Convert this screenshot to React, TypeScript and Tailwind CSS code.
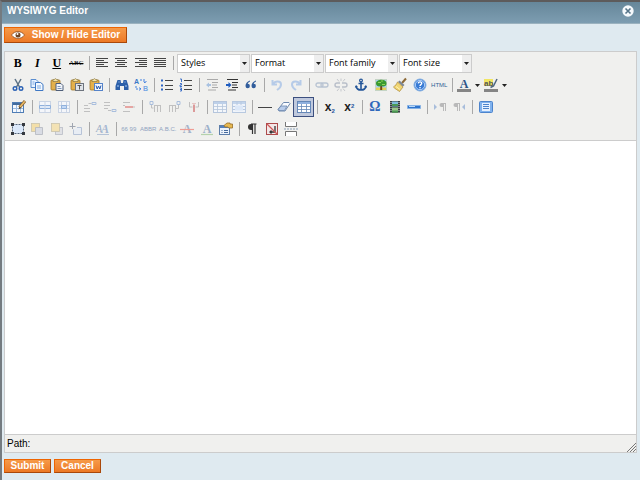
import type { ReactNode } from "react";
import { clsx } from "clsx";

interface Tool {
    label: string;
    icon: ReactNode;
    disabled?: boolean;
    active?: boolean;
    menu?: boolean;
}

const svg = (children: ReactNode) => (
    <svg viewBox="0 0 14 14" className="w-[14px] h-[14px] shrink-0 overflow-visible" fill="none" aria-hidden="true">
        {children}
    </svg>
);

const lines = (d: string) => svg(<path d={d} stroke="#444" />);

const clipboard = (overlay: ReactNode) =>
    svg(
        <>
            <rect x="1" y="2" width="9" height="10" rx="1" fill="#e3b04b" stroke="#9c7527" strokeWidth=".8" />
            <path d="M3 3.500h5V1.600H6.800L5.500.6 4.200 1.600H3z" fill="#f5e3a4" stroke="#7b6a3a" strokeWidth=".6" />
            {overlay}
        </>
    );

const pageStack = (x: string, back: string, front: string) =>
    svg(
        <>
            <rect x="1.500" y="1.500" width="8" height="8" fill={back} stroke="#c9c2ac" strokeWidth=".8" />
            <path d={x} fill={front} stroke="#b3b6be" strokeWidth=".8" />
        </>
    );

const binoculars = svg(
    <>
        <path d="M2.500 2h3l.5 3h2l.5-3h3l2 6v4H9V8H5v4H.5V8z" fill="#2c5fa8" />
        <path d="M2 8h2M10 8h2M3.500 4h1M9.500 4h1" stroke="#a9ccf5" strokeWidth="1.200" />
    </>
);

const listIcon = (marks: ReactNode) =>
    svg(
        <>
            {marks}
            <path d="M5 2.500h8M5 7.500h8M5 11.500h8" stroke="#444" />
        </>
    );

const indentIcon = (arrow: string, color: string, ink: string) =>
    svg(
        <>
            <path d="M2 1.500h11M7 4.500h6M7 7h5M7 9.500h6M3 12h8" stroke={ink} />
            <path d={arrow} fill={color} />
        </>
    );

const grid = (head: string, line: string, fill: string) =>
    svg(
        <>
            <rect x=".5" y="1.500" width="13" height="11" fill={fill} stroke={line} />
            <path d="M1 2h12v2H1z" fill={head} />
            <path d="M1 6.500h12M1 9.500h12M4.500 4v8M9.500 4v8" stroke={line} strokeWidth=".8" />
        </>
    );

const letterMark = (color: string, bar: string, barY: string) =>
    svg(
        <>
            <text x="7" y="11" textAnchor="middle" fontSize="12" fontWeight="bold" fontFamily="Liberation Serif, serif" fill={color}>A</text>
            <path d={barY} stroke={bar} strokeWidth="1.200" />
        </>
    );

const tinyText = (text: string) => (
    <span className="font-['Liberation_Sans',sans-serif] text-[6px] leading-none text-[#8fa3bf]">{text}</span>
);

const serif = "font-['Liberation_Serif',serif] text-[12px] leading-none text-black";

const formatting: Tool[] = [
    { label: "Bold", icon: <b className={serif}>B</b> },
    { label: "Italic", icon: <b className={clsx(serif, "italic")}>I</b> },
    { label: "Underline", icon: <b className={clsx(serif, "underline")}>U</b> },
    { label: "Strikethrough", icon: <span className="font-['Liberation_Serif',serif] text-[7px] leading-none text-black line-through">ABC</span> }
];

const alignment: Tool[] = [
    { label: "Align left", icon: lines("M1 2.500h12M1 4.500h8M1 6.500h12M1 8.500h8M1 10.500h12") },
    { label: "Align center", icon: lines("M1 2.500h12M3 4.500h8M1 6.500h12M3 8.500h8M1 10.500h12") },
    { label: "Align right", icon: lines("M1 2.500h12M5 4.500h8M1 6.500h12M5 8.500h8M1 10.500h12") },
    { label: "Align full", icon: lines("M1 2.500h12M1 4.500h12M1 6.500h12M1 8.500h12M1 10.500h12") }
];

const rowTwo: Tool[][] = [
    [
        {
            label: "Cut",
            icon: svg(
                <>
                    <path d="M4 1l4.500 8M10 1L5.500 9" stroke="#5c7286" strokeWidth="1.500" />
                    <circle cx="4" cy="10.500" r="1.800" stroke="#2b62b5" strokeWidth="1.400" />
                    <circle cx="10" cy="10.500" r="1.800" stroke="#2b62b5" strokeWidth="1.400" />
                </>
            )
        },
        {
            label: "Copy",
            icon: svg(
                <>
                    <path d="M1 1.500h5l2 2v6H1z" fill="#e8f2ff" stroke="#5b8ed0" />
                    <path d="M5.500 4.500h5l2.500 2v6H5.500z" fill="#f4f9ff" stroke="#3f78c4" />
                    <path d="M7 8h4M7 10h4M2.500 4h2M2.500 6h2" stroke="#7da9e0" />
                </>
            )
        },
        { label: "Paste", icon: clipboard(<><path d="M6 5.500h5l2 2v5H6z" fill="#f2f5fa" stroke="#4f5f7a" /><path d="M7.500 8.500h3M7.500 10.500h4" stroke="#7e97bb" /></>) },
        { label: "Paste as plain text", icon: clipboard(<><rect x="5.500" y="5.500" width="8" height="7" fill="#dfe3e8" stroke="#6d747e" /><path d="M7.500 7.500h4M9.500 7.500v4" stroke="#555" /></>) },
        { label: "Paste from Word", icon: clipboard(<><rect x="5.500" y="5.500" width="8" height="7" fill="#f4f8ff" stroke="#5583c9" /><path d="M7 7.500l1.200 3.500 1.300-3 1.300 3L12 7.500" stroke="#2456a8" /></>) }
    ],
    [
        { label: "Find", icon: binoculars },
        {
            label: "Find and replace",
            icon: svg(
                <>
                    <text x="0" y="6" fontSize="7" fontWeight="bold" fontFamily="Liberation Sans, sans-serif" fill="#3b78c9">A</text>
                    <text x="9" y="13" fontSize="7" fontWeight="bold" fontFamily="Liberation Sans, sans-serif" fill="#75a6e5">B</text>
                    <path d="M6 2h5v3M9.500 3.500L11 5l1.500-1.500M2 8v3h5M5.500 9.500L7 11l-1.500 1.500" stroke="#3f7fe0" strokeDasharray="2 1" />
                </>
            )
        }
    ],
    [
        { label: "Unordered list", icon: listIcon(<path d="M1 2.500h2M1 7.500h2M1 11.500h2" stroke="#2c64c4" strokeWidth="2" />) },
        { label: "Ordered list", icon: listIcon(<path d="M1 1h1.500v3M1 5.500h1.500V7H1v1.500h2M1 10h1.500v3H1M1 11.500h1.500" stroke="#2c64c4" strokeWidth=".9" />) }
    ],
    [
        { label: "Outdent", disabled: true, icon: indentIcon("M1 7l3-2.500V6h2v2H4v1.500z", "#a8c2e2", "#aaa") },
        { label: "Indent", icon: indentIcon("M6.500 7l-3-3v2H1v2h2.500v2z", "#1e5cc0", "#333") },
        { label: "Block quote", icon: svg(<path d="M6 2.500C3 3.500 1.500 5.500 1.500 8a2.200 2.200 0 1 0 2.200-2.200C4 4.800 4.800 4 6 3.500zM12 2.500C9 3.500 7.500 5.500 7.500 8a2.200 2.200 0 1 0 2.200-2.200c.3-1 1.100-1.800 2.300-2.300z" fill="#315d9c" />) }
    ],
    [
        { label: "Undo", disabled: true, icon: svg(<path d="M2.500 2v4.500H7M3 6c2-3.500 8-3.500 8 .5 0 3-2 4-4 5.500" stroke="#b6cbe8" strokeWidth="2" />) },
        { label: "Redo", disabled: true, icon: svg(<path d="M11.500 2v4.500H7M11 6C9 2.500 3 2.500 3 6.500c0 3 2 4 4 5.500" stroke="#b6cbe8" strokeWidth="2" />) }
    ],
    [
        { label: "Insert link", disabled: true, icon: svg(<><rect x="1" y="5" width="7" height="4" rx="2" stroke="#b8c3d2" strokeWidth="1.300" /><rect x="6" y="5" width="7" height="4" rx="2" stroke="#b8c3d2" strokeWidth="1.300" /></>) },
        { label: "Unlink", disabled: true, icon: svg(<><path d="M6 5H3a2 2 0 0 0 0 4h3M8 5h3a2 2 0 0 1 0 4H8" stroke="#b8bec9" strokeWidth="1.400" /><path d="M3 1l2 2.500M7 .5V3M11 1L9 3.500M3 13l2-2.500M7 13.500V11M11 13l-2-2.500" stroke="#c5c8cd" /></>) },
        { label: "Anchor", icon: svg(<><circle cx="7" cy="2.500" r="1.400" stroke="#245699" strokeWidth="1.200" /><path d="M7 4v8M4.500 5.500h5M2 8c.5 3 2.500 4 5 4s4.500-1 5-4" stroke="#245699" strokeWidth="1.600" /><path d="M.8 9.500L2 7l2 2zM13.200 9.500L12 7l-2 2z" fill="#245699" /></>) },
        { label: "Insert image", icon: svg(<><rect x="1.500" y="1.500" width="11" height="11" fill="#a9d3f7" stroke="#c4d4c4" /><path d="M2 9.500h10V12H2z" fill="#e6d25a" /><path d="M6.200 7h2v5h-2z" fill="#6e4a1e" /><path d="M2 5.500C2 1 12 .5 12.500 5c.5 3.500-3.500 4-5.500 3C5 9 2 8 2 5.500z" fill="#3a9a30" /><path d="M4 4.500h3M8 6.500h3M7 3h2" stroke="#8ed257" /></>) },
        { label: "Cleanup", icon: svg(<><path d="M13 .5L9 5" stroke="#8d6936" strokeWidth="2" /><path d="M6.500 2.500l5 4.500-1.500 1.500-5-4.500z" fill="#7b8694" /><path d="M4.500 4l5.500 5-3.500 4.500c-1-1-4.500-2.500-6-4.500C2 8 3.500 6.500 4.500 4z" fill="#f0d674" stroke="#a98331" strokeWidth=".7" /><path d="M3 8.500l4 3" stroke="#fff2b2" /></>) },
        { label: "Help", icon: svg(<><circle cx="7" cy="7" r="6" fill="#387bd5" stroke="#83afe1" /><circle cx="7" cy="7" r="4.700" stroke="#d7e8ff" strokeWidth=".8" /><path d="M5.300 5.400c.1-2.100 3.600-1.900 3.400.1C8.600 6.700 7 6.700 7 8M7 9v1.300" stroke="#fff" strokeWidth="1.400" /></>) },
        { label: "Edit HTML source", icon: <span className="font-['Liberation_Sans',sans-serif] text-[6px] leading-none text-[#2f5f95]">HTML</span> }
    ],
    [
        { label: "Text color", menu: true, icon: svg(<><text x="7" y="10" textAnchor="middle" fontSize="12" fontWeight="bold" fontFamily="Liberation Serif, serif" fill="#2d5487">A</text><path d="M0 12.500h14" stroke="#858585" strokeWidth="3" /></>) },
        { label: "Background color", menu: true, icon: svg(<><path d="M0 1h9v7H0z" fill="#f1e562" /><text x="0" y="7.500" fontSize="8" fontWeight="bold" fontFamily="Liberation Sans, sans-serif" fill="#555">ab</text><path d="M13 1L9.500 8l-3 1.500" stroke="#4d6680" strokeWidth="1.500" /><path d="M0 12.500h14" stroke="#858585" strokeWidth="3" /></>) }
    ]
];

const rowIcon = (d: string, box: string, accent = "#a9bedd") =>
    svg(
        <>
            <path d={d} stroke="#c0c0c0" />
            <path d={box} stroke={accent} />
        </>
    );

const rowThree: Tool[][] = [
    [{ label: "Insert table", icon: svg(<><rect x=".5" y="2.500" width="11" height="10" fill="#f4f8fd" stroke="#4f7db5" /><path d="M1 3h10v2H1z" fill="#426b9c" /><path d="M1 8.500h10M4.500 5v7M8.500 5v7" stroke="#9bbce3" /><path d="M13 1L7.500 7.500" stroke="#8a622f" strokeWidth="3" /><path d="M12.700 1.300L7.800 7.200" stroke="#e9bb69" strokeWidth="1.500" /><path d="M7.500 6.500l-1 3 2.700-1.500z" fill="#4c4437" /></>) }],
    [
        { label: "Table row properties", disabled: true, icon: svg(<><rect x="1.500" y="1.500" width="11" height="11" fill="#f4f6fa" stroke="#cad4e4" /><path d="M1.500 5.500h11v3h-11z" fill="#e0eaf8" stroke="#8fb0dc" /><path d="M7 2v11" stroke="#cad4e4" /></>) },
        { label: "Table cell properties", disabled: true, icon: svg(<><rect x="1.500" y="1.500" width="11" height="11" fill="#f4f6fa" stroke="#cad4e4" /><path d="M2 5.500h10M2 8.500h10M4.500 2v10M9.500 2v10" stroke="#cad4e4" /><path d="M4.500 5.500h5v3h-5z" fill="#c5d9f5" stroke="#8fb0dc" /></>) }
    ],
    [
        { label: "Insert row before", disabled: true, icon: rowIcon("M1 5.500h4M1 8.500h6M1 11.500h6M5.500 3.500h3", "M9 2.500h4v2H9z") },
        { label: "Insert row after", disabled: true, icon: rowIcon("M1 2.500h6M1 5.500h6M1 8.500h4M5 10.500h3", "M9 9.500h4v2H9z") },
        { label: "Delete row", disabled: true, icon: rowIcon("M1 2.500h7M1 11.500h7M1 5.500h2M11 7h2", "M3 6.500h8M3 7.500h8", "#e6a5a2") }
    ],
    [
        { label: "Insert column before", disabled: true, icon: rowIcon("M3.500 4v4h2M6.500 5v7M9.500 5v7M12.500 5v7M6 5.500h7", "M2 1.500h3v3H2z") },
        { label: "Insert column after", disabled: true, icon: rowIcon("M1.500 5v7M4.500 5v7M7.500 5v7M1 5.500h7M8 8.500h2.500V5", "M9 1.500h3v3H9z") },
        { label: "Remove column", disabled: true, icon: rowIcon("M2.500 2v5h3M11.500 2v5h-3", "M5.500 3l1.500 1.500L8.500 3M6.500 5v7M7.500 5v7", "#dc9a9a") }
    ],
    [
        { label: "Split merged cells", disabled: true, icon: grid("#bdd0e9", "#b5c5dc", "#f4f7fb") },
        { label: "Merge cells", disabled: true, icon: svg(<><rect x=".5" y="1.500" width="13" height="11" fill="#f0f4fa" stroke="#b8c9e0" /><path d="M1 2h12v2H1z" fill="#c3d5ec" /><path d="M5 2v3M9 2v3M1 6.500h2M11 6.500h2M1 9.500h2M11 9.500h2" stroke="#b8c9e0" /><path d="M3 5.500h8v5H3z" fill="#dce8f8" /></>) }
    ],
    [
        { label: "Horizontal ruler", icon: lines("M0 7.500h14") },
        { label: "Remove formatting", icon: svg(<><path d="M6.500 2.500h5.500l1 1L8 11H2L1 9.500z" fill="#fafcff" stroke="#6c88ae" /><path d="M1.500 9L4 6h6L7.500 10.500H2z" fill="#b9cdeb" stroke="#6c88ae" strokeWidth=".8" /></>) },
        { label: "Toggle guidelines", active: true, icon: grid("#8fb0de", "#6588b8", "#fff") }
    ],
    [
        { label: "Subscript", icon: <b className="font-['Liberation_Sans',sans-serif] text-[12px] leading-none text-[#222]">x<sub className="text-[6px] leading-none text-[#2756a0]">2</sub></b> },
        { label: "Superscript", icon: <b className="font-['Liberation_Sans',sans-serif] text-[12px] leading-none text-[#222]">x<sup className="text-[6px] leading-none text-[#2756a0]">2</sup></b> }
    ],
    [
        { label: "Insert custom character", icon: <b className="font-['Liberation_Serif',serif] text-[14px] leading-none text-[#2f68bb]">Ω</b> },
        { label: "Insert embedded media", icon: svg(<><path d="M2 1h10v12H2z" fill="#343b3f" /><path d="M4 1.500h6v5H4z" fill="#7fbddd" /><path d="M4 7.500h6v5H4z" fill="#9cc78a" /><path d="M4 5h6M4 11.500h6" stroke="#4b9a55" strokeWidth="2" /><path d="M3 2v11M11 2v11" stroke="#d4d4d4" strokeDasharray="1 1" /></>) },
        { label: "Insert advanced horizontal rule", icon: svg(<><path d="M.5 5.500h13v3H.5z" fill="#2f74cc" stroke="#86b2e4" /><path d="M2 6.500h6" stroke="#b7d8fa" /></>) }
    ],
    [
        { label: "Left to right", disabled: true, icon: svg(<><path d="M1 4l3 3-3 3z" fill="#a8bddb" /><path d="M10.500 3v8M12.500 3v8M13 3.500H8.500" stroke="#b9b9b9" /><path d="M8.500 3H10v4H8.500a2 2 0 0 1 0-4z" fill="#b9b9b9" /></>) },
        { label: "Right to left", disabled: true, icon: svg(<><path d="M13 4l-3 3 3 3z" fill="#a8bddb" /><path d="M5.500 3v8M7.500 3v8M8 3.500H3.500" stroke="#b9b9b9" /><path d="M3.500 3H5v4H3.500a2 2 0 0 1 0-4z" fill="#b9b9b9" /></>) }
    ],
    [{ label: "Toggle fullscreen", icon: svg(<><rect x=".5" y="1.500" width="13" height="11" rx="1" fill="#80b2ee" stroke="#4d84cc" /><path d="M3 3h8v8H3z" fill="#e6f1ff" /><path d="M4 4.500h6M4 6.500h6M4 8.500h6" stroke="#4d84cc" /></>) }]
];

const rowFour: Tool[][] = [
    [
        { label: "Insert layer", icon: svg(<><rect x="1.500" y="2.500" width="11" height="9" fill="#dce9fa" stroke="#55657c" strokeDasharray="2 1" /><path d="M0 1h3v3H0zM11 1h3v3h-3zM0 10h3v3H0zM11 10h3v3h-3z" fill="#35393f" /></>) },
        { label: "Move forward", disabled: true, icon: pageStack("M5.500 5.500h7v7h-7z", "#f3dfa9", "#d9dce4") },
        { label: "Move backward", disabled: true, icon: svg(<><rect x="5.500" y="5.500" width="7" height="7" fill="#e0e1e5" stroke="#b9bcc6" strokeWidth=".8" /><rect x="1.500" y="1.500" width="8" height="8" fill="#f3e2b4" stroke="#c9c2ac" strokeWidth=".8" /></>) },
        { label: "Toggle absolute positioning", disabled: true, icon: svg(<><path d="M3.500 1v6M.5 4.500h6" stroke="#a0a6b1" /><path d="M4.500 7.500v5h8v-7H8" stroke="#b7c3d7" fill="#e8edf4" /></>) }
    ],
    [{ label: "Edit CSS style", disabled: true, icon: svg(<><text x="0" y="10" fontSize="10" fontStyle="italic" fontFamily="Liberation Serif, serif" fill="#9aacc7">A</text><text x="5" y="11" fontSize="12" fontWeight="bold" fontStyle="italic" fontFamily="Liberation Serif, serif" fill="#a5b7d2">A</text><path d="M1 12.500h12" stroke="#b5c3d7" /></>) }],
    [
        { label: "Citation", disabled: true, icon: tinyText("66 99") },
        { label: "Abbreviation", disabled: true, icon: tinyText("ABBR") },
        { label: "Acronym", disabled: true, icon: tinyText("A.B.C.") },
        { label: "Deletion", disabled: true, icon: letterMark("#a6b3c9", "#ef9d94", "M0 7.500h14") },
        { label: "Insertion", disabled: true, icon: letterMark("#9cafc9", "#b5d2ac", "M1 12.500h12") },
        { label: "Insert or edit attributes", icon: svg(<><rect x=".5" y="3.500" width="10" height="9" fill="#edf3fb" stroke="#5e7ea9" /><path d="M1 4h9v2H1z" fill="#5680ba" /><path d="M2.500 8.500h1M5 8.500h4M2.500 10.500h1M5 10.500h4" stroke="#456a9d" /><path d="M5 3.500L8 1h3v1h2.500v4H10L8.500 5H6z" fill="#e7b951" stroke="#986d28" strokeWidth=".8" /></>) }
    ],
    [
        { label: "Visual control characters", icon: svg(<><path d="M7.500 2v10M10 2v10M11.500 2H6" stroke="#333" strokeWidth="1.200" /><path d="M7.500 2v6H6a3 3 0 0 1 0-6z" fill="#333" /></>) },
        { label: "Insert non-breaking space", icon: svg(<><rect x="1.500" y="1.500" width="11" height="11" fill="#f3e7e7" stroke="#ad4b4b" /><path d="M10 4v6H5M6.500 8.500L5 10l1.500 1.500" stroke="#333" strokeWidth="1.300" /><path d="M2 2l10 10" stroke="#cf5757" strokeWidth="1.200" /></>) },
        { label: "Insert page break", icon: svg(<><path d="M1.500 0v4.500h11V0M1.500 14V9.500h11V14" fill="#fff" stroke="#777" /><path d="M0 7h14" stroke="#8aa0b8" strokeDasharray="2 1" /></>) }
    ]
];

const groupWidths = ["", "w-[21px]", "w-[39px]", "w-[59px]", "w-[78px]", "w-[98px]", "w-[117px]", "w-[137px]"];

function MenuArrow() {
    return (
        <svg viewBox="0 0 5 3" className="w-[5px] h-[3px] shrink-0" aria-hidden="true">
            <path d="M0 0h5L2.500 3z" fill="#222" />
        </svg>
    );
}

function Separator() {
    return <span className="mr-[2px] ml-[3px] h-[14px] w-px bg-[#a8a8a8]" />;
}

function ToolGroup({ tools }: { tools: Tool[] }) {
    const hasMenus = tools.some((t) => t.menu);
    return (
        <div className={clsx("flex items-center", hasMenus ? "w-auto" : groupWidths[tools.length])}>
            {tools.map((t) => (
                <button
                    key={t.label}
                    type="button"
                    aria-label={t.label}
                    aria-pressed={t.active}
                    disabled={t.disabled}
                    className={clsx(
                        "flex h-5 min-w-0 items-center justify-center whitespace-nowrap",
                        t.menu ? "w-[27px] gap-[4px]" : "flex-1",
                        t.active && "border border-[#3c4f7f] bg-[#c0c9dd]"
                    )}
                >
                    {t.icon}
                    {t.menu && <MenuArrow />}
                </button>
            ))}
        </div>
    );
}

function ToolRow({ groups, children }: { groups: Tool[][]; children?: ReactNode }) {
    return (
        <div className="flex min-h-[22px] flex-wrap items-center">
            {groups.map((tools, i) => (
                <div key={tools[0].label} className="flex items-center">
                    {i > 0 && <Separator />}
                    <ToolGroup tools={tools} />
                </div>
            ))}
            {children}
        </div>
    );
}

function ListBox({ label }: { label: string }) {
    return (
        <label className="flex h-[19px] w-[73px] items-stretch border border-[#ccc] bg-white">
            <select
                aria-label={label}
                className="min-w-0 flex-1 appearance-none bg-white pl-[3px] font-['Open_Sans',sans-serif] text-[9px] text-black outline-none"
            >
                <option>{label}</option>
            </select>
            <span className="flex w-[9px] items-center justify-center bg-[#eee]">
                <MenuArrow />
            </span>
        </label>
    );
}

const orange = "flex items-center justify-center border border-[#ed6502] border-r-[#a9480a] border-b-[#a9480a] bg-linear-to-b from-[#f69a48] to-[#ec7925] text-[10px] font-bold leading-none text-white";

export default function App() {
    return (
        <div className="flex min-h-screen flex-col border-t-2 border-l-2 border-t-[#5d5b5b] border-l-[#747b80] bg-[#dfeaf0] font-['Liberation_Sans',Arial,sans-serif]">
            <header className="flex h-[22px] items-center justify-between border-b border-[#9bb2bf] bg-linear-to-b from-[#66879a] to-[#7d9db1] pr-[6px] pb-[3px] pl-[5px]">
                <h1 className="text-[10px] font-bold leading-none text-white">WYSIWYG Editor</h1>
                <button type="button" aria-label="Close">
                    <svg viewBox="0 0 12 12" className="w-3 h-3" aria-hidden="true">
                        <circle cx="6" cy="6" r="5.700" fill="#f5f9fc" />
                        <path d="M3.500 3.500l5 5M8.500 3.500l-5 5" stroke="#557488" strokeWidth="1.600" />
                    </svg>
                </button>
            </header>

            <main className="flex flex-1 flex-col px-[2px] pt-[3px] pb-[7px]">
                <button type="button" className={clsx(orange, "h-4 w-[123px] gap-[7px] self-start")}>
                    <svg viewBox="0 0 14 10" className="w-[14px] h-[10px]" aria-hidden="true">
                        <path d="M.5 5C3.500.5 10.500.5 13.500 5c-3 4.500-10 4.500-13 0z" fill="#fff" stroke="#7c3f16" strokeWidth=".7" />
                        <circle cx="7" cy="5" r="2.500" fill="#6f4524" />
                        <circle cx="6.500" cy="4" r="1" fill="#fff" />
                    </svg>
                    Show / Hide Editor
                </button>

                <section className="mt-2 mr-px flex flex-1 flex-col border border-[#ccc]">
                    <div className="border-b border-[#ccc] bg-[#f0f0ee] pl-[3px]">
                        <ToolRow groups={[formatting, alignment]}>
                            <Separator />
                            <div className="flex gap-px pl-px">
                                <ListBox label="Styles" />
                                <ListBox label="Format" />
                                <ListBox label="Font family" />
                                <ListBox label="Font size" />
                            </div>
                        </ToolRow>
                        <ToolRow groups={rowTwo} />
                        <ToolRow groups={rowThree} />
                        <ToolRow groups={rowFour} />
                    </div>
                    <textarea aria-label="Content" className="block w-full flex-1 resize-none bg-white p-2 text-xs outline-none" />
                    <div className="flex h-[18px] items-center justify-between border-t border-[#ccc] bg-[#f0f0ee] pl-[2px] text-[10px] leading-none text-black">
                        <span>Path:</span>
                        <svg viewBox="0 0 9 9" className="h-[9px] w-[9px] self-end" aria-hidden="true">
                            <path d="M0 9l9-9M3 9l6-6M6 9l3-3" stroke="#777" />
                        </svg>
                    </div>
                </section>

                <div className="mt-[6px] flex gap-[3px]">
                    <button type="button" className={clsx(orange, "h-[14px] w-[47px]")}>Submit</button>
                    <button type="button" className={clsx(orange, "h-[14px] w-[47px]")}>Cancel</button>
                </div>
            </main>
        </div>
    );
}
